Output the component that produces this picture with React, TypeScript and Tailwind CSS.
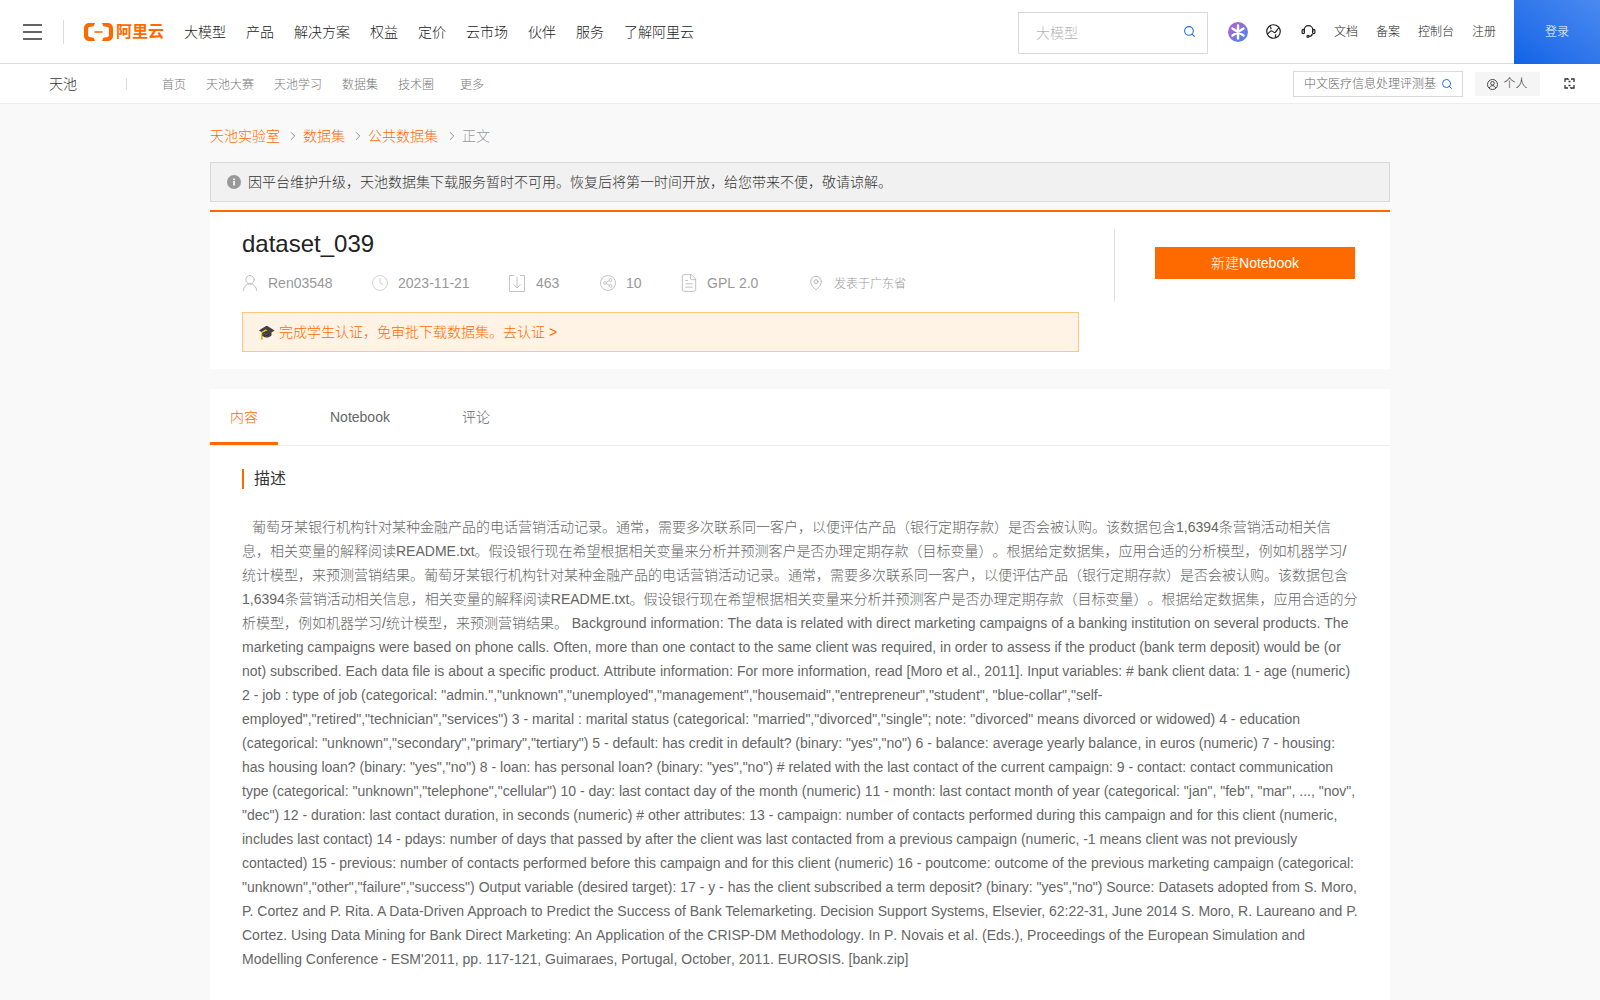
import { ChevronRight, Clock, FileText, MapPin, Search, UserRound } from "lucide-react";
import type { ReactNode } from "react";

const mainNav = ["大模型", "产品", "解决方案", "权益", "定价", "云市场", "伙伴", "服务", "了解阿里云"];
const sideLinks = [
  { label: "文档", className: "w-[24px]" },
  { label: "备案", className: "ml-[18px] w-[24px]" },
  { label: "控制台", className: "ml-[18px] w-[36px]" },
  { label: "注册", className: "ml-[18px] w-[24px]" },
];
const subNav = [
  { label: "首页", className: "" },
  { label: "天池大赛", className: "ml-[20px]" },
  { label: "天池学习", className: "ml-[20px]" },
  { label: "数据集", className: "ml-[20px]" },
  { label: "技术圈", className: "ml-[20px]" },
  { label: "更多", className: "ml-[26px]" },
];

const descriptionHead =
  '葡萄牙某银行机构针对某种金融产品的电话营销活动记录。通常，需要多次联系同一客户，以便评估产品（银行定期存款）是否会被认购。该数据包含1,6394条营销活动相关信息，相关变量的解释阅读README.txt。假设银行现在希望根据相关变量来分析并预测客户是否办理定期存款（目标变量）。根据给定数据集，应用合适的分析模型，例如机器学习/统计模型，来预测营销结果。葡萄牙某银行机构针对某种金融产品的电话营销活动记录。通常，需要多次联系同一客户，以便评估产品（银行定期存款）是否会被认购。该数据包含1,6394条营销活动相关信息，相关变量的解释阅读README.txt。假设银行现在希望根据相关变量来分析并预测客户是否办理定期存款（目标变量）。根据给定数据集，应用合适的分析模型，例如机器学习/统计模型，来预测营销结果。 Background information: The data is related with direct marketing campaigns of a banking institution on several products. The marketing campaigns were based on phone calls. Often, more than one contact to the same client was required, in order to assess if the product (bank term deposit) would be (or not) subscribed. Each data file is about a specific product. Attribute information: For more information, read [Moro et al., 2011]. Input variables: # bank client data: 1 - age (numeric) 2 - job : type of job (categorical: "admin.","unknown","unemployed","management","housemaid","entrepreneur","student", "blue-collar","self-employed","retired","technician","services") 3 - marital : marital status (categorical: "married","divorced","single"; note: "divorced" means divorced or widowed) 4 - education (categorical: "unknown","secondary","primary","tertiary") 5 - default: has credit in default? (binary: "yes","no") 6 - balance: average yearly balance, in euros (numeric) 7 - housing: has housing loan? (binary: "yes","no") 8 - loan: has personal loan? (binary: "yes","no") # related with the last contact of the current campaign: 9 - contact: contact communication type (categorical: "unknown","telephone","cellular") 10 - day: last contact day of the month (numeric) 11 - month: last contact month of year (categorical: "jan", "feb", "mar", ..., "nov", "dec") 12 - duration: last contact duration, in seconds (numeric) # other attributes: 13 - campaign: number of contacts performed during this campaign and for this client (numeric, includes last contact) 14 - pdays: number of days that passed by after the client was last contacted from a previous campaign (numeric, -1 means client was not previously contacted) 15 - previous: number of contacts performed before this campaign and for this client (numeric) 16 - poutcome: outcome of the previous marketing campaign (categorical: "unknown","other","failure","success") Output variable (desired target): 17 - y - has the client subscribed a term deposit? (binary: "yes","no") Source: Datasets adopted from S. Moro, ';
const descriptionTight =
  "P. Cortez and P. Rita. A Data-Driven Approach to Predict the Success of Bank Telemarketing. Decision Support Systems, Elsevier, 62:22-31, June 2014 S. Moro, R. Laureano and P.";
const descriptionTail =
  " Cortez. Using Data Mining for Bank Direct Marketing: An Application of the CRISP-DM Methodology. In P. Novais et al. (Eds.), Proceedings of the European Simulation and Modelling Conference - ESM'2011, pp. 117-121, Guimaraes, Portugal, October, 2011. EUROSIS. [bank.zip]";

function DownloadIcon() {
  return (
    <svg width="16" height="18" viewBox="0 0 16 18" fill="none" stroke="#c4c4c4" strokeWidth="1">
      <path d="M5 1.500H.5v16h15v-16H11" />
      <path d="M8 3v11M4.500 10.500 8 14l3.500-3.500" />
    </svg>
  );
}

function ShareIcon() {
  return (
    <svg width="16" height="16" viewBox="0 0 16 16" fill="none" stroke="#c4c4c4" strokeWidth="1">
      <circle cx="8" cy="8" r="7.500" />
      <circle cx="5" cy="8" r="1.400" />
      <circle cx="10.500" cy="5" r="1.400" />
      <circle cx="10.500" cy="11" r="1.400" />
      <path d="M6.200 7.300 9.300 5.700M6.200 8.700l3.100 1.600" />
    </svg>
  );
}

function Logo() {
  return (
    <div className="flex items-center gap-[3px] text-[#ff6a00]">
      <svg width="29" height="18" viewBox="0 0 29 18" fill="currentColor">
        <path d="M5 0h6L9.700 3.200 5.500 4.100C4.700 4.300 4.100 4.900 4.100 5.700v6.600c0 .8.600 1.400 1.400 1.600l4.200.9L11 18H5c-2.800 0-5-2.200-5-5V5c0-2.800 2.200-5 5-5Z" />
        <path d="M24 0h-6l1.300 3.200 4.200.9c.8.200 1.400.8 1.400 1.600v6.600c0 .8-.6 1.400-1.400 1.600l-4.200.9L18 18h6c2.800 0 5-2.200 5-5V5c0-2.800-2.200-5-5-5Z" />
        <rect x="10.500" y="8.200" width="8" height="1.600" />
      </svg>
      <span className="text-[16px] leading-[20px] font-bold">阿里云</span>
    </div>
  );
}

function MetaItem({ icon, className, children }: { icon: ReactNode; className: string; children: ReactNode }) {
  return (
    <div className={`flex items-center ${className}`}>
      <span className="mr-[10px] flex w-[16px] shrink-0 justify-center">{icon}</span>
      {children}
    </div>
  );
}

export default function App() {
  return (
    <div className="h-[1000px] overflow-hidden bg-[#f9f9f9] font-['Liberation_Sans','Noto_Sans_CJK_SC',sans-serif] text-[14px] font-light text-[#333] [font-kerning:none] [text-spacing-trim:space-all]">
      <header className="flex h-[64px] items-center border-b border-[#d9d9d9] bg-white">
        <div className="ml-[23px] flex w-[19px] flex-col gap-[5px]">
          <span className="h-[2px] bg-[#666]" />
          <span className="h-[2px] bg-[#666]" />
          <span className="h-[2px] bg-[#666]" />
        </div>
        <span className="mr-[20px] ml-[21px] h-[24px] w-px bg-[#ddd]" />
        <Logo />
        <nav className="ml-[20px] flex gap-[20px] pt-[2px] text-[#222]">
          {mainNav.map((item) => (
            <span key={item}>{item}</span>
          ))}
        </nav>
        <div className="mt-[3px] ml-auto flex h-[42px] w-[190px] items-center border border-[#d9d9d9] pr-[11px] pl-[17px]">
          <span className="flex-1 text-[#b5b5b5]">大模型</span>
          <Search size={13} color="#1b6fe8" className="-mt-[3px]" />
        </div>
        <svg className="ml-[20px]" width="20" height="20" viewBox="0 0 20 20">
          <defs>
            <linearGradient id="spark" x1="0" y1="0" x2="1" y2="1">
              <stop offset="0" stopColor="#c05cc8" />
              <stop offset="1" stopColor="#3d8cf5" />
            </linearGradient>
          </defs>
          <circle cx="10" cy="10" r="10" fill="url(#spark)" />
          <path d="M10 3.500v13M4.500 6.500l11 7M15.500 6.500l-11 7" stroke="#fff" strokeWidth="2.400" strokeLinecap="round" />
        </svg>
        <svg className="ml-[18px]" width="15" height="15" viewBox="0 0 14 14" fill="none" stroke="#222" strokeWidth="1.100">
          <circle cx="7" cy="7" r="6.300" />
          <path d="M1 9.500C3 9 3.500 6 5.500 6.500S7.500 9 9 7.500s1.500-3.500 3.500-3.800M3.500 2c1 1 1.500 1.800 1 3M9 12.500c-.5-1-.5-2 .5-2.800" />
        </svg>
        <svg className="ml-[20px]" width="15" height="15" viewBox="0 0 14 14" fill="none" stroke="#222" strokeWidth="1.100">
          <path d="M3 7.500V5.500a4 4 0 0 1 8 0v2" />
          <rect x="1" y="5" width="2.200" height="4" rx="1" />
          <rect x="10.800" y="5" width="2.200" height="4" rx="1" />
          <path d="M10.500 9c0 1.500-1.200 2.500-3 2.500" />
          <circle cx="6.500" cy="11.500" r="1" />
        </svg>
        <div className="ml-[18px] flex pt-[1px] text-[12px] text-[#222]">
          {sideLinks.map((item) => (
            <span key={item.label} className={item.className}>
              {item.label}
            </span>
          ))}
        </div>
        <button className="ml-[18px] h-[64px] w-[86px] bg-gradient-to-tr from-[#0f62e6] to-[#4a8af0] text-[12px] text-white">登录</button>
      </header>

      <div className="flex h-[40px] items-center border-b border-[#eee] bg-white">
        <span className="ml-[49px] pt-[2px] text-[14px] text-[#333]">天池</span>
        <span className="mr-[35px] ml-[49px] h-[12px] w-px bg-[#ddd]" />
        <nav className="flex pt-[2px] text-[12px] text-[#777]">
          {subNav.map((item) => (
            <span key={item.label} className={item.className}>
              {item.label}
            </span>
          ))}
        </nav>
        <div className="mr-[-1px] ml-auto flex h-[26px] w-[170px] items-center border border-[#d9d9d9] pr-[9px] pl-[10px]">
          <span className="flex-1 overflow-hidden pt-[1px] text-[12px] whitespace-nowrap text-[#666]">中文医疗信息处理评测基</span>
          <Search size={12} color="#1b6fe8" className="ml-[4px] shrink-0" />
        </div>
        <div className="ml-[13px] flex h-[24px] w-[65px] items-center justify-center gap-[5px] bg-[#f5f5f5] pt-[1px] text-[12px] text-[#333]">
          <svg width="11" height="11" viewBox="0 0 11 11" fill="none" stroke="#333" strokeWidth="0.900">
            <circle cx="5.500" cy="5.500" r="5" />
            <circle cx="5.500" cy="4.300" r="1.800" />
            <path d="M2.300 9c.6-1.600 1.800-2.300 3.200-2.300S8.100 7.400 8.700 9" />
          </svg>
          个人
        </div>
        <svg className="mr-[25px] ml-[24px]" width="11" height="11" viewBox="0 0 11 11" fill="none" stroke="#333" strokeWidth="1.300">
          <path d="M1 4V1h3L3 0M10 4V1H7M1 7v3h3M10 7v3H7l1 1M4.500 3.500h2M4.500 7.500h2" />
        </svg>
      </div>

      <main className="mx-auto w-[1180px]">
        <div className="mt-[22px] flex h-[20px] items-center text-[#ff6a00]">
          <span>天池实验室</span>
          <ChevronRight size={14} strokeWidth={1.400} color="#777" className="mr-[3px] ml-[6px]" />
          <span>数据集</span>
          <ChevronRight size={14} strokeWidth={1.400} color="#777" className="mr-[3px] ml-[6px]" />
          <span>公共数据集</span>
          <ChevronRight size={14} strokeWidth={1.400} color="#777" className="mr-[3px] ml-[7px]" />
          <span className="text-[#999]">正文</span>
        </div>

        <div className="mt-[16px] flex h-[40px] items-center border border-[#d9d9d9] bg-[#f1f1f1] pl-[16px]">
          <svg width="14" height="14" viewBox="0 0 14 14">
            <circle cx="7" cy="7" r="7" fill="#999" />
            <rect x="6.200" y="6" width="1.600" height="4.500" fill="#fff" />
            <rect x="6.200" y="3.500" width="1.600" height="1.600" fill="#fff" />
          </svg>
          <span className="ml-[7px]">因平台维护升级，天池数据集下载服务暂时不可用。恢复后将第一时间开放，给您带来不便，敬请谅解。</span>
        </div>

        <section className="mt-[8px] flex h-[159px] border-t-2 border-[#ff6a00] bg-white">
          <div className="w-[904px] pt-[18px] pl-[32px]">
            <h1 className="text-[24px] leading-[28px] font-normal text-[#222]">dataset_039</h1>
            <div className="mt-[15px] flex h-[20px] items-center text-[#999]">
              <MetaItem className="w-[130px]" icon={<UserRound size={20} strokeWidth={1} color="#b5b5b5" className="-mx-[2px] shrink-0" />}>
                Ren03548
              </MetaItem>
              <MetaItem className="w-[137px]" icon={<Clock size={18} strokeWidth={1} color="#c4c4c4" className="-mx-[1px] shrink-0" />}>
                2023-11-21
              </MetaItem>
              <MetaItem className="w-[91px]" icon={<DownloadIcon />}>
                <span className="ml-[1px]">463</span>
              </MetaItem>
              <MetaItem className="w-[81px]" icon={<ShareIcon />}>
                10
              </MetaItem>
              <MetaItem className="w-[127px]" icon={<FileText size={20} strokeWidth={1} color="#b5b5b5" className="-mx-[2px] shrink-0" />}>
                GPL 2.0
              </MetaItem>
              <MetaItem className="text-[12px]" icon={<MapPin size={16} strokeWidth={1} color="#999" />}>
                <span className="pt-[2px]">发表于广东省</span>
              </MetaItem>
            </div>
            <div className="mt-[19px] flex h-[40px] w-[837px] items-center border border-[#ffc680] bg-[#fff3e6] pl-[15px] text-[#ff6a00]">
              <span className="mr-[4px] text-[14px] text-[#333]">🎓</span>
              完成学生认证，免审批下载数据集。去认证 &gt;
            </div>
          </div>
          <div className="mt-[17px] h-[73px] w-px bg-[#e3e3e3]" />
          <div className="pt-[35px] pl-[40px]">
            <button className="h-[32px] w-[200px] bg-[#ff6a00] text-white">新建Notebook</button>
          </div>
        </section>

        <section className="mt-[20px] bg-white pb-[60px]">
          <div className="flex h-[57px] border-b border-[#eee] text-[#666]">
            <div className="flex items-center border-b-[3px] border-[#ff6a00] px-[20px] pt-[3px] text-[#ff6a00]">内容</div>
            <div className="ml-[32px] flex items-center px-[20px]">Notebook</div>
            <div className="ml-[32px] flex items-center px-[20px]">评论</div>
          </div>
          <div className="px-[32px] pt-[23px]">
            <h2 className="border-l-2 border-[#ff6a00] pl-[10px] text-[16px] leading-[20px] font-normal text-[#333]">描述</h2>
            <p className="mt-[26px] indent-[10px] text-[14px] leading-[24px] break-words text-[#666]">
              {descriptionHead}
              <span className="[font-kerning:normal]">{descriptionTight}</span>
              {descriptionTail}
            </p>
          </div>
        </section>
      </main>
    </div>
  );
}
